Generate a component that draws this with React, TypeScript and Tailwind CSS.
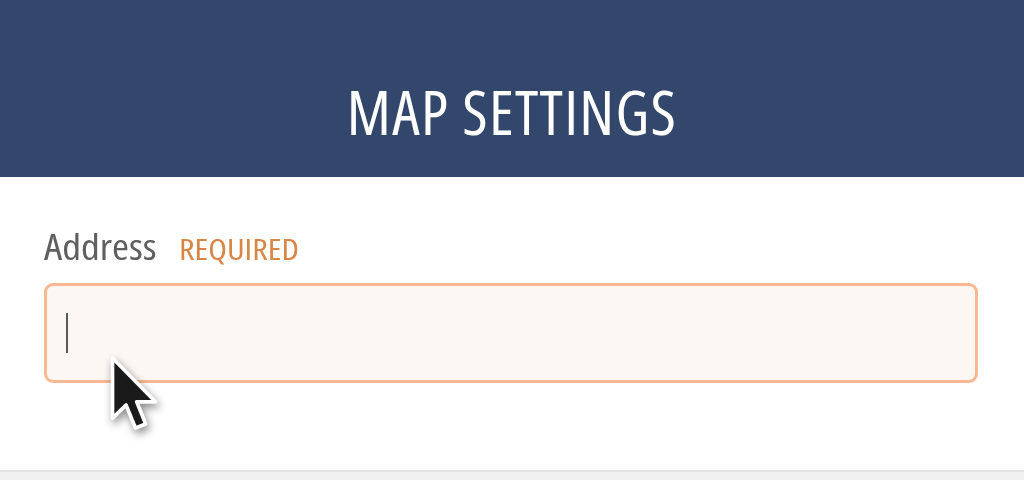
const Cursor = () => (
  <svg
    width="54"
    height="82"
    viewBox="0 0 13 20"
    className="absolute left-[106px] top-[176px] drop-shadow-[2px_4px_4px_rgba(0,0,0,0.45)]"
  >
    <path
      d="M1.5 1.2 L1.5 15.9 L4.8 12.7 L7.1 18.3 L9.6 17.3 L7.4 11.9 L12 11.9 Z"
      fill="#1a1a1a"
      stroke="#ffffff"
      strokeWidth="0.9"
      strokeLinejoin="round"
    />
  </svg>
);

export default function App() {
  return (
    <div className="w-[1024px] h-[480px] bg-[#f1f1f1] flex flex-col font-['Open_Sans',sans-serif] overflow-hidden">
      {/* Header */}
      <div className="h-[177px] bg-[#33466c] flex items-center justify-center pt-[44px]">
        <h1 className="text-white text-[62px] leading-none font-normal font-stretch-[75%] tracking-[1.3px]">MAP SETTINGS</h1>
      </div>

      {/* Form */}
      <div className="relative h-[295px] bg-white border-b-2 border-[#e4e4e4] px-[44px] pt-[50px]">
        <div className="flex items-baseline">
          <span className="inline-block origin-left scale-x-[1.11] text-[#5f5f5f] text-[37px] leading-none font-normal font-stretch-[75%]">
            Address
          </span>
          <span className="ml-[34px] inline-block origin-left scale-x-[1.18] text-[#d98545] text-[29px] leading-none font-normal font-stretch-[75%]">
            REQUIRED
          </span>
        </div>
        <div className="mt-[19px] h-[100px] w-[934px] rounded-[9px] border-[3px] border-[#f8b892] bg-[#fcf7f3] flex items-center pl-[19px]">
          <div className="w-[2px] h-[40px] bg-[#5a5a5a]" />
        </div>
        <Cursor />
      </div>
    </div>
  );
}
